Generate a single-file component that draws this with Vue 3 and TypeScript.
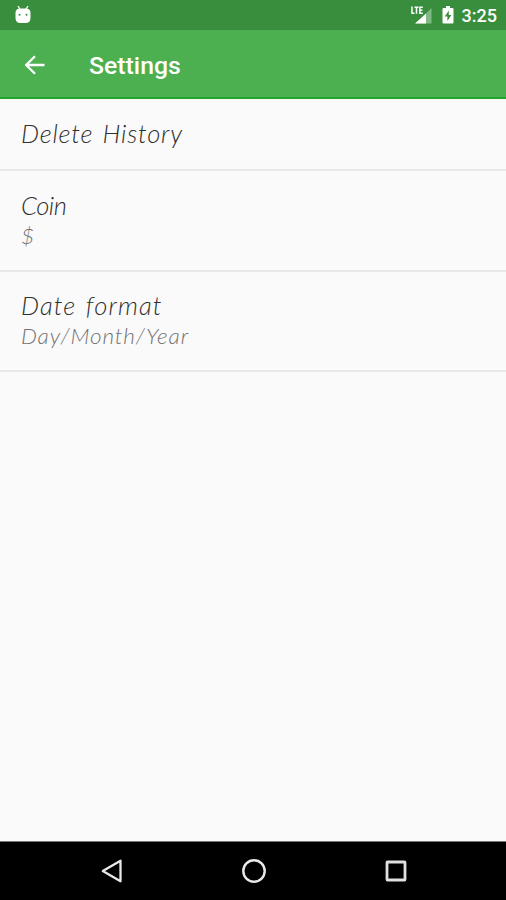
<script setup lang="ts">
interface Preference {
  id: string
  title: string
  summary?: string
}

const preferences: Preference[] = [
  { id: 'history', title: 'Delete History' },
  { id: 'coin', title: 'Coin', summary: '$' },
  { id: 'date', title: 'Date format', summary: 'Day/Month/Year' },
]
</script>

<template>
  <div class="screen">
    <div class="status">
      <svg class="debug" viewBox="0 0 18 20" width="18" height="20">
        <path d="M4 1l2 3M14 1l-2 3" stroke="#fff" stroke-width="1.3" />
        <path d="M1.500 8Q1.500 3.500 6 3.500h6q4.500 0 4.500 4.500v5q0 5-5 5h-5q-5 0-5-5z" fill="#fff" />
        <circle cx="5.500" cy="9.800" r="1" fill="#388e3c" />
        <circle cx="12.500" cy="9.800" r="1" fill="#388e3c" />
      </svg>
      <div class="indicators">
        <svg viewBox="0 0 23 20" width="23" height="20">
          <path d="M21.500 3v15.500h-15.500z" fill="#80b983" />
          <path d="M16 8.500v10h-11z" fill="#fff" />
          <path d="M0 0h14v10H0z" fill="#388e3c" />
          <path d="M2 1.500v6.700h2.500M4.500 2.200h4M6.500 2.200V8.800M12.800 2.200H9.900v6h2.900M9.900 5.200h2.500" fill="none" stroke="#fff" stroke-width="1.500" />
        </svg>
        <svg class="battery" viewBox="0 0 12 18" width="12" height="18">
          <path d="M4 0h4v2h2.500q1 0 1 1v13.500q0 1-1 1h-9q-1 0-1-1V3q0-1 1-1H4z" fill="#fff" />
          <path d="M6.800 4.500L2.800 10.500h2.600v4.500l4-6H6.800z" fill="#388e3c" />
        </svg>
        <span class="clock">3:25</span>
      </div>
    </div>
    <header class="toolbar">
      <svg class="back" viewBox="0 0 22 22" width="22" height="22">
        <path d="M20.500 11H2.500M11 2.200L2.200 11l8.800 8.800" fill="none" stroke="#fff" stroke-width="2.300" />
      </svg>
      <h1>Settings</h1>
    </header>
    <main>
      <section v-for="item in preferences" :key="item.id" class="preference" :class="item.id">
        <div class="title">{{ item.title }}</div>
        <div v-if="item.summary" class="summary">{{ item.summary }}</div>
      </section>
    </main>
    <nav class="navigation">
      <svg viewBox="0 0 24 26" width="24" height="26">
        <path d="M20.500 2.700v20.600L2.800 13z" fill="none" stroke="#e8e8e8" stroke-width="2.300" stroke-linejoin="round" />
      </svg>
      <svg viewBox="0 0 26 26" width="26" height="26">
        <circle cx="13" cy="13" r="10.700" fill="none" stroke="#e8e8e8" stroke-width="2.400" />
      </svg>
      <svg viewBox="0 0 24 24" width="24" height="24">
        <rect x="3" y="3" width="18" height="18" rx=".5" fill="none" stroke="#e0e0e0" stroke-width="2.800" />
      </svg>
    </nav>
  </div>
</template>

<style>
body {
  margin: 0;
}
</style>

<style scoped>
.screen {
  display: flex;
  flex-direction: column;
  width: 506px;
  height: 900px;
  overflow: hidden;
  background: #fafafa;
  font-family: Roboto, sans-serif;
}
.status {
  box-sizing: border-box;
  height: 30px;
  flex: none;
  display: flex;
  justify-content: space-between;
  padding: 5px 9px 0 14px;
  background: #388e3c;
  color: #fff;
}
.indicators {
  display: flex;
  align-items: flex-start;
}
.battery {
  margin: 1px 8px 0 9px;
}
.clock {
  font-size: 18px;
  font-weight: 500;
  line-height: 22px;
}
.toolbar {
  box-sizing: border-box;
  height: 69px;
  flex: none;
  display: flex;
  align-items: center;
  padding: 2px 24px 0;
  background: #4caf50;
  border-bottom: 2px solid #20a329;
  color: #fff;
}
h1 {
  margin: 2px 0 0 43px;
  font-size: 24.8px;
  line-height: 30px;
  font-weight: 500;
}
main {
  flex: 1;
}
.preference {
  box-sizing: border-box;
  padding: 20px 21px;
  border-bottom: 2px solid #e8e8e8;
  font-family: Lato, sans-serif;
  font-style: italic;
  font-weight: 300;
}
.preference.date {
  padding-top: 19px;
}
.title {
  height: 30px;
  line-height: 29px;
  font-size: 25.5px;
  color: #303030;
}
.history .title {
  letter-spacing: 0.8px;
  word-spacing: 2px;
}
.coin .title {
  letter-spacing: -0.5px;
}
.date .title {
  letter-spacing: 1.1px;
  word-spacing: 2px;
}
.summary {
  height: 29px;
  line-height: 29px;
  font-size: 22.5px;
  letter-spacing: 0.9px;
  color: #737373;
}
.navigation {
  box-sizing: border-box;
  height: 59px;
  flex: none;
  display: flex;
  align-items: center;
  justify-content: space-between;
  padding: 0 98px 1px 100px;
  border-top: 1px solid #777;
  background: #000;
}
</style>
